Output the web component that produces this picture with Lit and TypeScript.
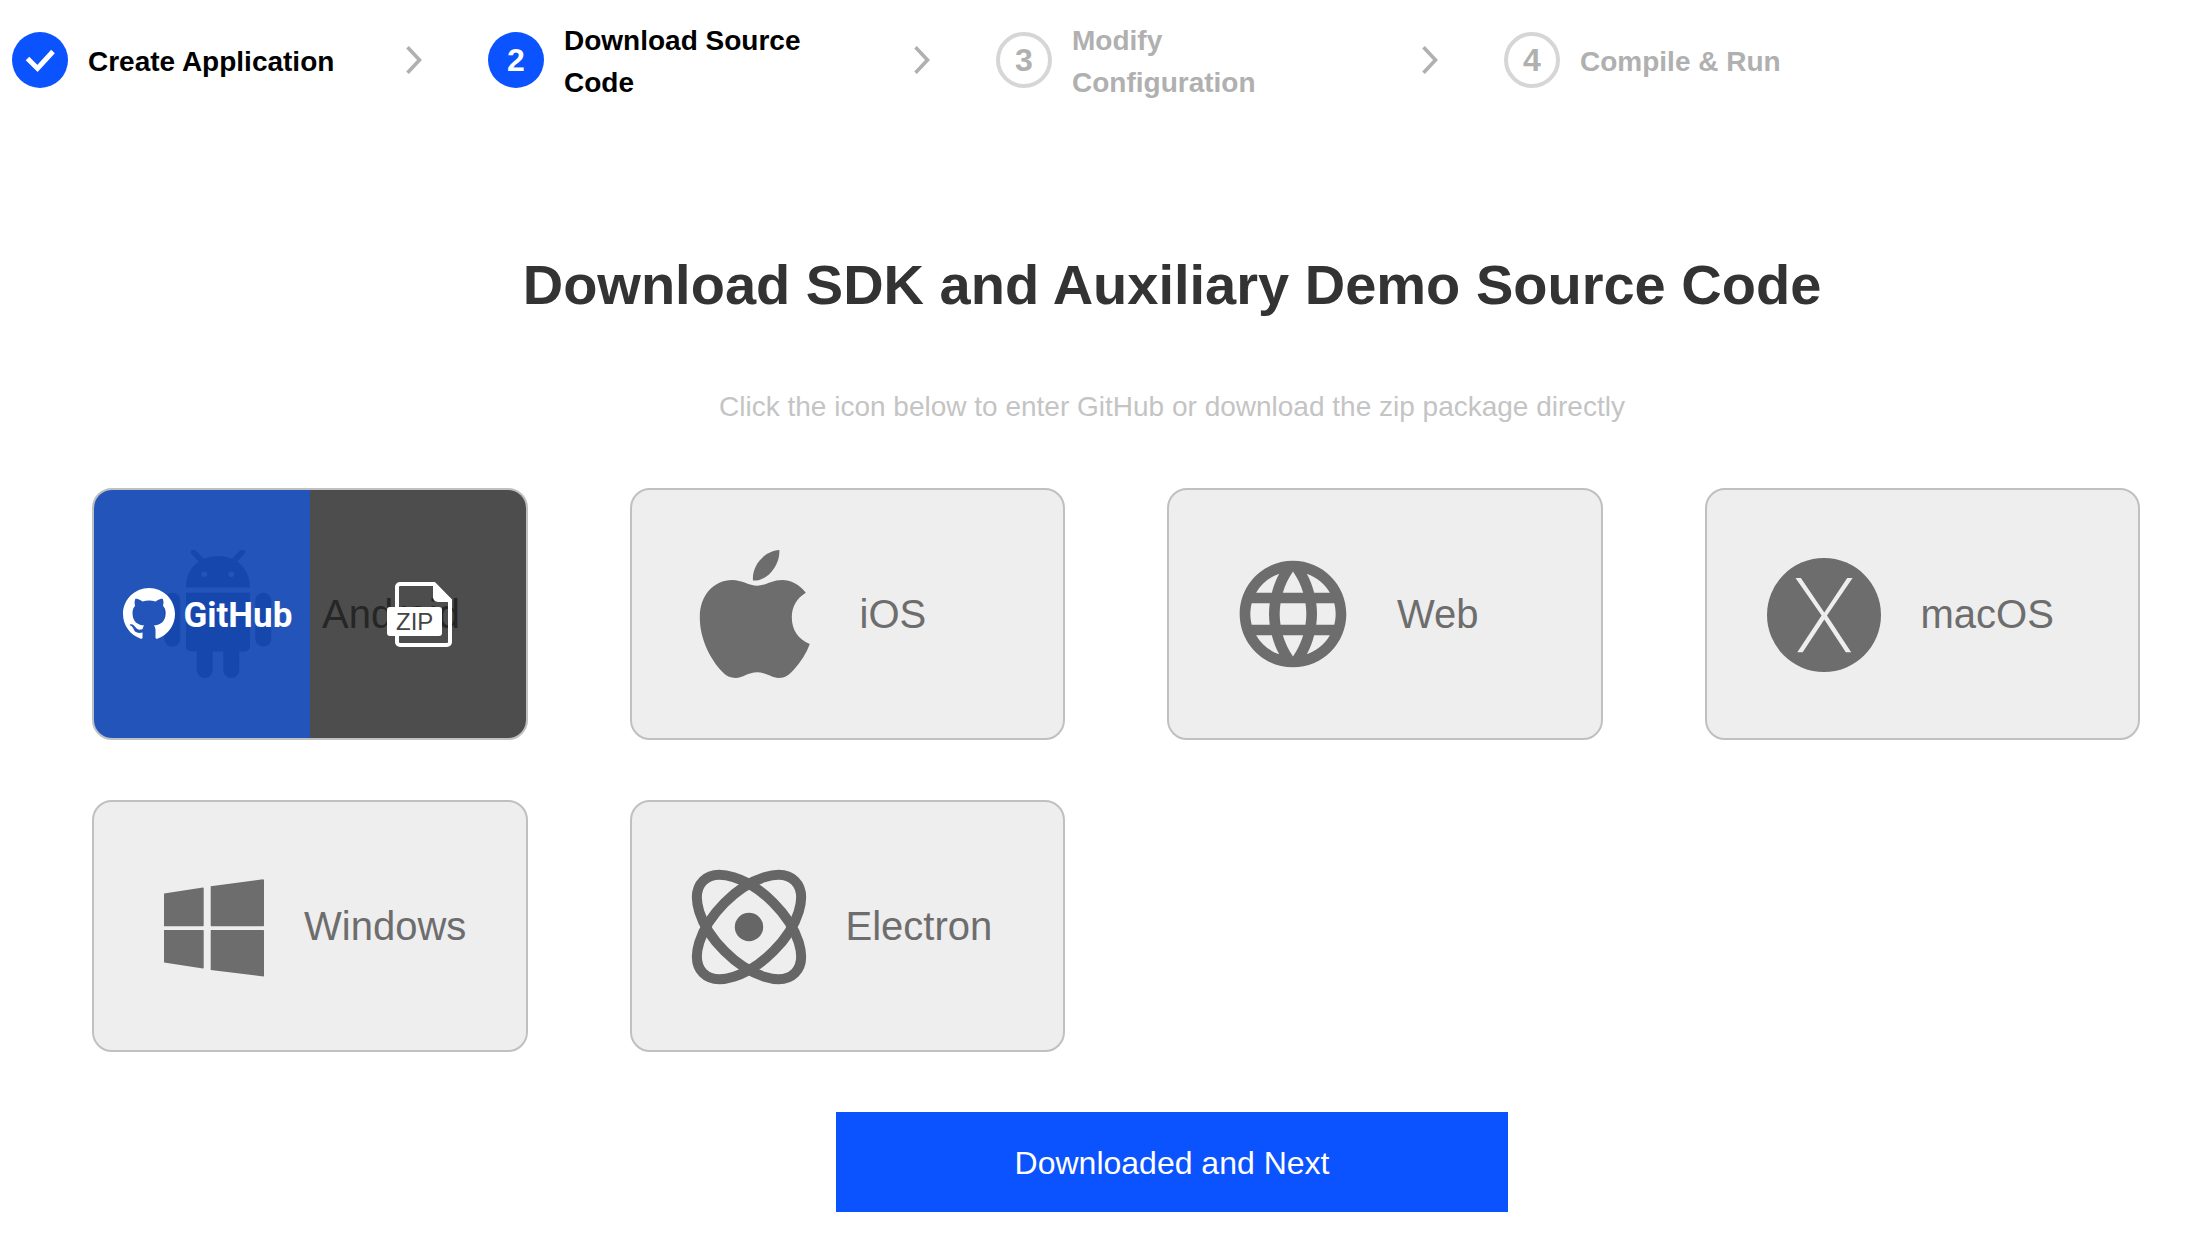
import { LitElement, html, svg, css, nothing } from "lit";
import type { TemplateResult } from "lit";
import { customElement, state } from "lit/decorators.js";
import { classMap } from "lit/directives/class-map.js";

interface Step {
  label: string;
  status: "done" | "current" | "todo";
}

interface Platform {
  name: string;
  icon: TemplateResult;
}

const steps: Step[] = [
  { label: "Create Application", status: "done" },
  { label: "Download Source Code", status: "current" },
  { label: "Modify Configuration", status: "todo" },
  { label: "Compile & Run", status: "todo" },
];

const androidIcon = html`<svg class="icon large" viewBox="0 0 128 128" aria-hidden="true">
  <path fill-rule="evenodd" d="M32 37.500C32 18 46 6 64 6s32 12 32 31.500zM50.300 21.500a2.800 2.800 0 1 0 0 5.600 2.800 2.800 0 0 0 0-5.600zM77.300 21.500a2.800 2.800 0 1 0 0 5.600 2.800 2.800 0 0 0 0-5.600z"/>
  <path d="M39.500 2.200l8.500 8.800M88.300 2.200l-8.500 8.800" fill="none" stroke="currentColor" stroke-width="5.500" stroke-linecap="round"/>
  <path d="M32 42.700h64V96.500a5 5 0 0 1-5 5H85.300V120a8 8 0 0 1-16 0V101.500H58.700V120a8 8 0 0 1-16 0V101.500H37a5 5 0 0 1-5-5z"/>
  <rect x="10.300" y="42.700" width="16" height="54" rx="8"/>
  <rect x="101.300" y="42.700" width="16" height="54" rx="8"/>
</svg>`;

const appleIcon = html`<svg class="icon large" viewBox="0 0 128 128" aria-hidden="true">
  <path d="M87.300 0C88.500 14 76 31.500 61 30.500 59.500 16 72 1 87.300 0z"/>
  <path d="M65.200 35.700C57 35.700 50 30 40.200 30 22 30 7.800 45 7.800 67.300 7.800 90 19 110 30 121.500c4 4.500 8.500 6.500 13.500 6.500 7.500 0 12.500-5.700 21.700-5.700 8.800 0 14.300 5.700 21.600 5.700 6.200 0 10.700-3.500 15.200-8.500 7-8 12.500-16.500 15.800-25.500C106 89 99.800 80 99.800 67.300c0-10.800 5.200-19.300 14-24.600C107.500 34.500 98.500 30 90.200 30 80 30 73.500 35.700 65.200 35.700z"/>
</svg>`;

const webIcon = html`<svg class="icon large" viewBox="0 0 24 24" aria-hidden="true">
  <path d="M11.990 2C6.470 2 2 6.480 2 12s4.470 10 9.990 10C17.520 22 22 17.520 22 12S17.520 2 11.990 2zm6.930 6h-2.950c-.32-1.250-.78-2.450-1.380-3.560 1.840.63 3.370 1.910 4.330 3.560zM12 4.040c.83 1.200 1.480 2.530 1.910 3.960h-3.820c.43-1.430 1.080-2.760 1.910-3.960zM4.260 14C4.100 13.360 4 12.690 4 12s.1-1.360.26-2h3.380c-.08.66-.14 1.320-.14 2s.06 1.340.14 2H4.260zm.82 2h2.950c.32 1.250.78 2.450 1.380 3.560-1.840-.63-3.370-1.900-4.330-3.560zm2.950-8H5.080c.96-1.660 2.490-2.930 4.330-3.560C8.810 5.550 8.350 6.750 8.030 8zM12 19.960c-.83-1.200-1.480-2.530-1.910-3.960h3.820c-.43 1.430-1.080 2.760-1.910 3.960zM14.340 14H9.660c-.09-.66-.16-1.320-.16-2s.07-1.350.16-2h4.680c.09.65.16 1.320.16 2s-.07 1.340-.16 2zm.25 5.560c.6-1.110 1.060-2.310 1.380-3.560h2.950c-.96 1.650-2.490 2.930-4.330 3.560zM16.360 14c.08-.66.14-1.320.14-2s-.06-1.340-.14-2h3.380c.16.64.26 1.310.26 2s-.1 1.360-.26 2h-3.380z"/>
</svg>`;

const macIcon = html`<svg class="icon medium" viewBox="0 -1 114 114" aria-hidden="true">
  <circle cx="57" cy="57" r="57"/>
  <path fill="#eeeeee" d="M28.500 20h5.400L57.300 54.500 80.200 20h5.400L60 57.600 84.200 94.200h-5.400L57.300 61.600 35.700 94.200h-5.400L54.600 57.600z"/>
</svg>`;

const windowsIcon = html`<svg class="icon small" viewBox="0 0 110 110" aria-hidden="true">
  <path d="M10 22.500 49 16.500l.7.600V54.800l-.5.500H10zM56.700 15.300 109.200 8.300l.8.600V54.800l-.6.500H57.200l-.5-.5zM10 59h39.200l.5.500V97l-.7.400L10 91.600zM57.200 59H109.400l.6.500V105l-.6.400L56.700 99V59.500z"/>
</svg>`;

const electronIcon = html`<svg class="icon medium dark" viewBox="0 -1 114 114" aria-hidden="true">
  <g fill="none" stroke="currentColor" stroke-width="10">
    <ellipse cx="57" cy="57" rx="65" ry="34.400" transform="rotate(45 57 57)"/>
    <ellipse cx="57" cy="57" rx="65" ry="34.400" transform="rotate(-45 57 57)"/>
  </g>
  <circle cx="57" cy="57" r="14.200"/>
</svg>`;

const githubMark = html`<svg class="github-mark" viewBox="0 0 16 16" aria-hidden="true">
  <path d="M8 0C3.580 0 0 3.580 0 8c0 3.540 2.290 6.530 5.470 7.590.4.070.55-.17.55-.38 0-.19-.01-.82-.01-1.490-2.010.37-2.530-.49-2.690-.94-.09-.23-.48-.94-.82-1.130-.28-.15-.68-.52-.01-.53.63-.01 1.080.58 1.230.82.72 1.210 1.870.87 2.330.66.07-.52.28-.87.51-1.070-1.780-.2-3.640-.89-3.640-3.950 0-.87.31-1.590.82-2.150-.08-.2-.36-1.020.08-2.120 0 0 .67-.21 2.200.82.64-.18 1.320-.27 2-.27s1.360.09 2 .27c1.530-1.040 2.200-.82 2.200-.82.44 1.100.16 1.920.08 2.120.51.56.82 1.270.82 2.150 0 3.070-1.870 3.750-3.650 3.950.29.25.54.73.54 1.480 0 1.070-.01 1.930-.01 2.200 0 .21.15.46.55.38A8.010 8.010 0 0 0 16 8c0-4.420-3.580-8-8-8z"/>
</svg>`;

const zipIcon = html`<svg class="zip-icon" viewBox="0 0 66 66" role="img" aria-label="Download ZIP">
  <path d="M10 25V5a3 3 0 0 1 3-3h34L63 18.500V60a3 3 0 0 1-3 3H13a3 3 0 0 1-3-3V51" fill="none" stroke="currentColor" stroke-width="4"/>
  <path d="M46 1h2.500L65 17.500V20H51a5 5 0 0 1-5-5z"/>
  <rect x="0" y="25" width="55" height="29" rx="3"/>
  <text class="zip-text" x="9" y="48">ZIP</text>
</svg>`;

const platforms: Platform[] = [
  { name: "Android", icon: androidIcon },
  { name: "iOS", icon: appleIcon },
  { name: "Web", icon: webIcon },
  { name: "macOS", icon: macIcon },
  { name: "Windows", icon: windowsIcon },
  { name: "Electron", icon: electronIcon },
];

@customElement("app-root")
export class AppRoot extends LitElement {
  static styles = css`
    :host {
      display: block;
      font-family: "Liberation Sans", Arial, Helvetica, sans-serif;
      background: #ffffff;
      color: #333333;
    }
    .steps {
      display: grid;
      grid-template-columns: 476fr 508fr 508fr 704fr;
      margin: 0;
      padding: 16px 0 0 12px;
      list-style: none;
    }
    .step {
      display: flex;
      align-items: center;
      gap: 20px;
      color: #000000;
    }
    .step.todo {
      color: #b0b0b0;
    }
    .badge {
      box-sizing: border-box;
      display: flex;
      align-items: center;
      justify-content: center;
      flex: none;
      width: 56px;
      height: 56px;
      border-radius: 50%;
      background: #0a53ff;
      color: #ffffff;
      font-size: 32px;
      font-weight: 700;
      line-height: 40px;
    }
    .todo .badge {
      border: 4px solid #d6d6d6;
      background: none;
      color: #b0b0b0;
    }
    .check {
      width: 56px;
      height: 56px;
    }
    .step-label {
      max-width: 260px;
      padding-top: 4px;
      font-size: 28px;
      font-weight: 700;
      line-height: 42px;
    }
    .chevron {
      flex: none;
      width: 16px;
      height: 28px;
      margin: 0 66px 0 auto;
      color: #b0b0b0;
    }
    .intro {
      padding: 149px 0 65px 136px;
      text-align: center;
    }
    .title {
      margin: 0 0 74px;
      font-size: 56px;
      line-height: 64px;
      font-weight: 700;
    }
    .subtitle {
      margin: 0;
      color: #c4c4c4;
      font-size: 28px;
      line-height: 32px;
    }
    .platforms {
      display: grid;
      grid-template-columns: repeat(4, 1fr);
      gap: 60px 102px;
      margin: 0;
      padding: 0 68px 0 92px;
      list-style: none;
    }
    .card {
      position: relative;
      box-sizing: border-box;
      height: 252px;
      overflow: hidden;
      border: 2px solid #c0c0c0;
      border-radius: 20px;
      background: #eeeeee;
      color: #6d6d6d;
    }
    .platform {
      display: flex;
      align-items: center;
      gap: 40px;
      width: 100%;
      height: 100%;
      margin: 0;
      padding: 0 0 0 60px;
      border: 0;
      background: none;
      color: inherit;
      font: inherit;
      font-size: 40px;
      text-align: left;
      cursor: pointer;
    }
    .icon {
      flex: none;
      fill: currentColor;
    }
    .large {
      width: 128px;
      height: 128px;
    }
    .medium {
      width: 114px;
      height: 114px;
      overflow: visible;
    }
    .small {
      width: 110px;
      height: 110px;
    }
    .dark {
      color: #666666;
    }
    .overlay {
      position: absolute;
      inset: 0;
      display: grid;
      grid-template-columns: 1fr 1fr;
    }
    .choice {
      display: flex;
      align-items: center;
      justify-content: center;
      color: #ffffff;
      text-decoration: none;
    }
    .github {
      gap: 8px;
      padding-left: 12px;
      background: rgba(11, 66, 178, 0.9);
    }
    .github-mark {
      width: 52px;
      height: 52px;
      fill: currentColor;
    }
    .github-word {
      padding-top: 2px;
      font-family: Roboto, "Liberation Sans", sans-serif;
      font-size: 35px;
      font-weight: 700;
    }
    .zip {
      padding: 2px 0 0 4px;
      background: rgba(8, 8, 8, 0.7);
    }
    .zip-icon {
      width: 66px;
      height: 66px;
      fill: currentColor;
    }
    .zip-text {
      fill: #444444;
      font-size: 24px;
    }
    .actions {
      display: flex;
      justify-content: center;
      padding: 60px 0 32px 136px;
    }
    .next {
      width: 672px;
      height: 100px;
      padding: 2px 0 0;
      border: 0;
      background: #0a53ff;
      color: #ffffff;
      font: inherit;
      font-size: 32px;
      cursor: pointer;
    }
  `;

  @state() private active = "Android";

  private renderStep(step: Step, index: number) {
    return html`<li
      class=${classMap({ step: true, todo: step.status === "todo" })}
      aria-current=${step.status === "current" ? "step" : nothing}
    >
      <span class="badge">
        ${step.status === "done"
          ? html`<svg class="check" viewBox="0 0 56 56" aria-hidden="true">
              ${svg`<path d="M15.500 26.500l10 10L41 19.500" fill="none" stroke="currentColor" stroke-width="5"/>`}
            </svg>`
          : index + 1}
      </span>
      <span class="step-label">${step.label}</span>
      ${index < steps.length - 1
        ? html`<svg class="chevron" viewBox="0 0 16 28" aria-hidden="true">
            <path d="M1.500 1.200 13.500 14 1.500 26.800" fill="none" stroke="currentColor" stroke-width="3.600"/>
          </svg>`
        : nothing}
    </li>`;
  }

  private renderPlatform(platform: Platform) {
    const active = this.active === platform.name;
    return html`<li class="card" @mouseenter=${() => (this.active = platform.name)}>
      <button class="platform" type="button" @click=${() => (this.active = platform.name)}>
        ${platform.icon}<span>${platform.name}</span>
      </button>
      ${active
        ? html`<div class="overlay">
            <a class="choice github" href="#github">${githubMark}<span class="github-word">GitHub</span></a>
            <a class="choice zip" href="#zip">${zipIcon}</a>
          </div>`
        : nothing}
    </li>`;
  }

  render() {
    return html`
      <nav aria-label="Progress">
        <ol class="steps">
          ${steps.map((step, index) => this.renderStep(step, index))}
        </ol>
      </nav>
      <main>
        <header class="intro">
          <h1 class="title">Download SDK and Auxiliary Demo Source Code</h1>
          <p class="subtitle">Click the icon below to enter GitHub or download the zip package directly</p>
        </header>
        <ul class="platforms">
          ${platforms.map((platform) => this.renderPlatform(platform))}
        </ul>
        <div class="actions">
          <button class="next" type="button">Downloaded and Next</button>
        </div>
      </main>
    `;
  }
}
